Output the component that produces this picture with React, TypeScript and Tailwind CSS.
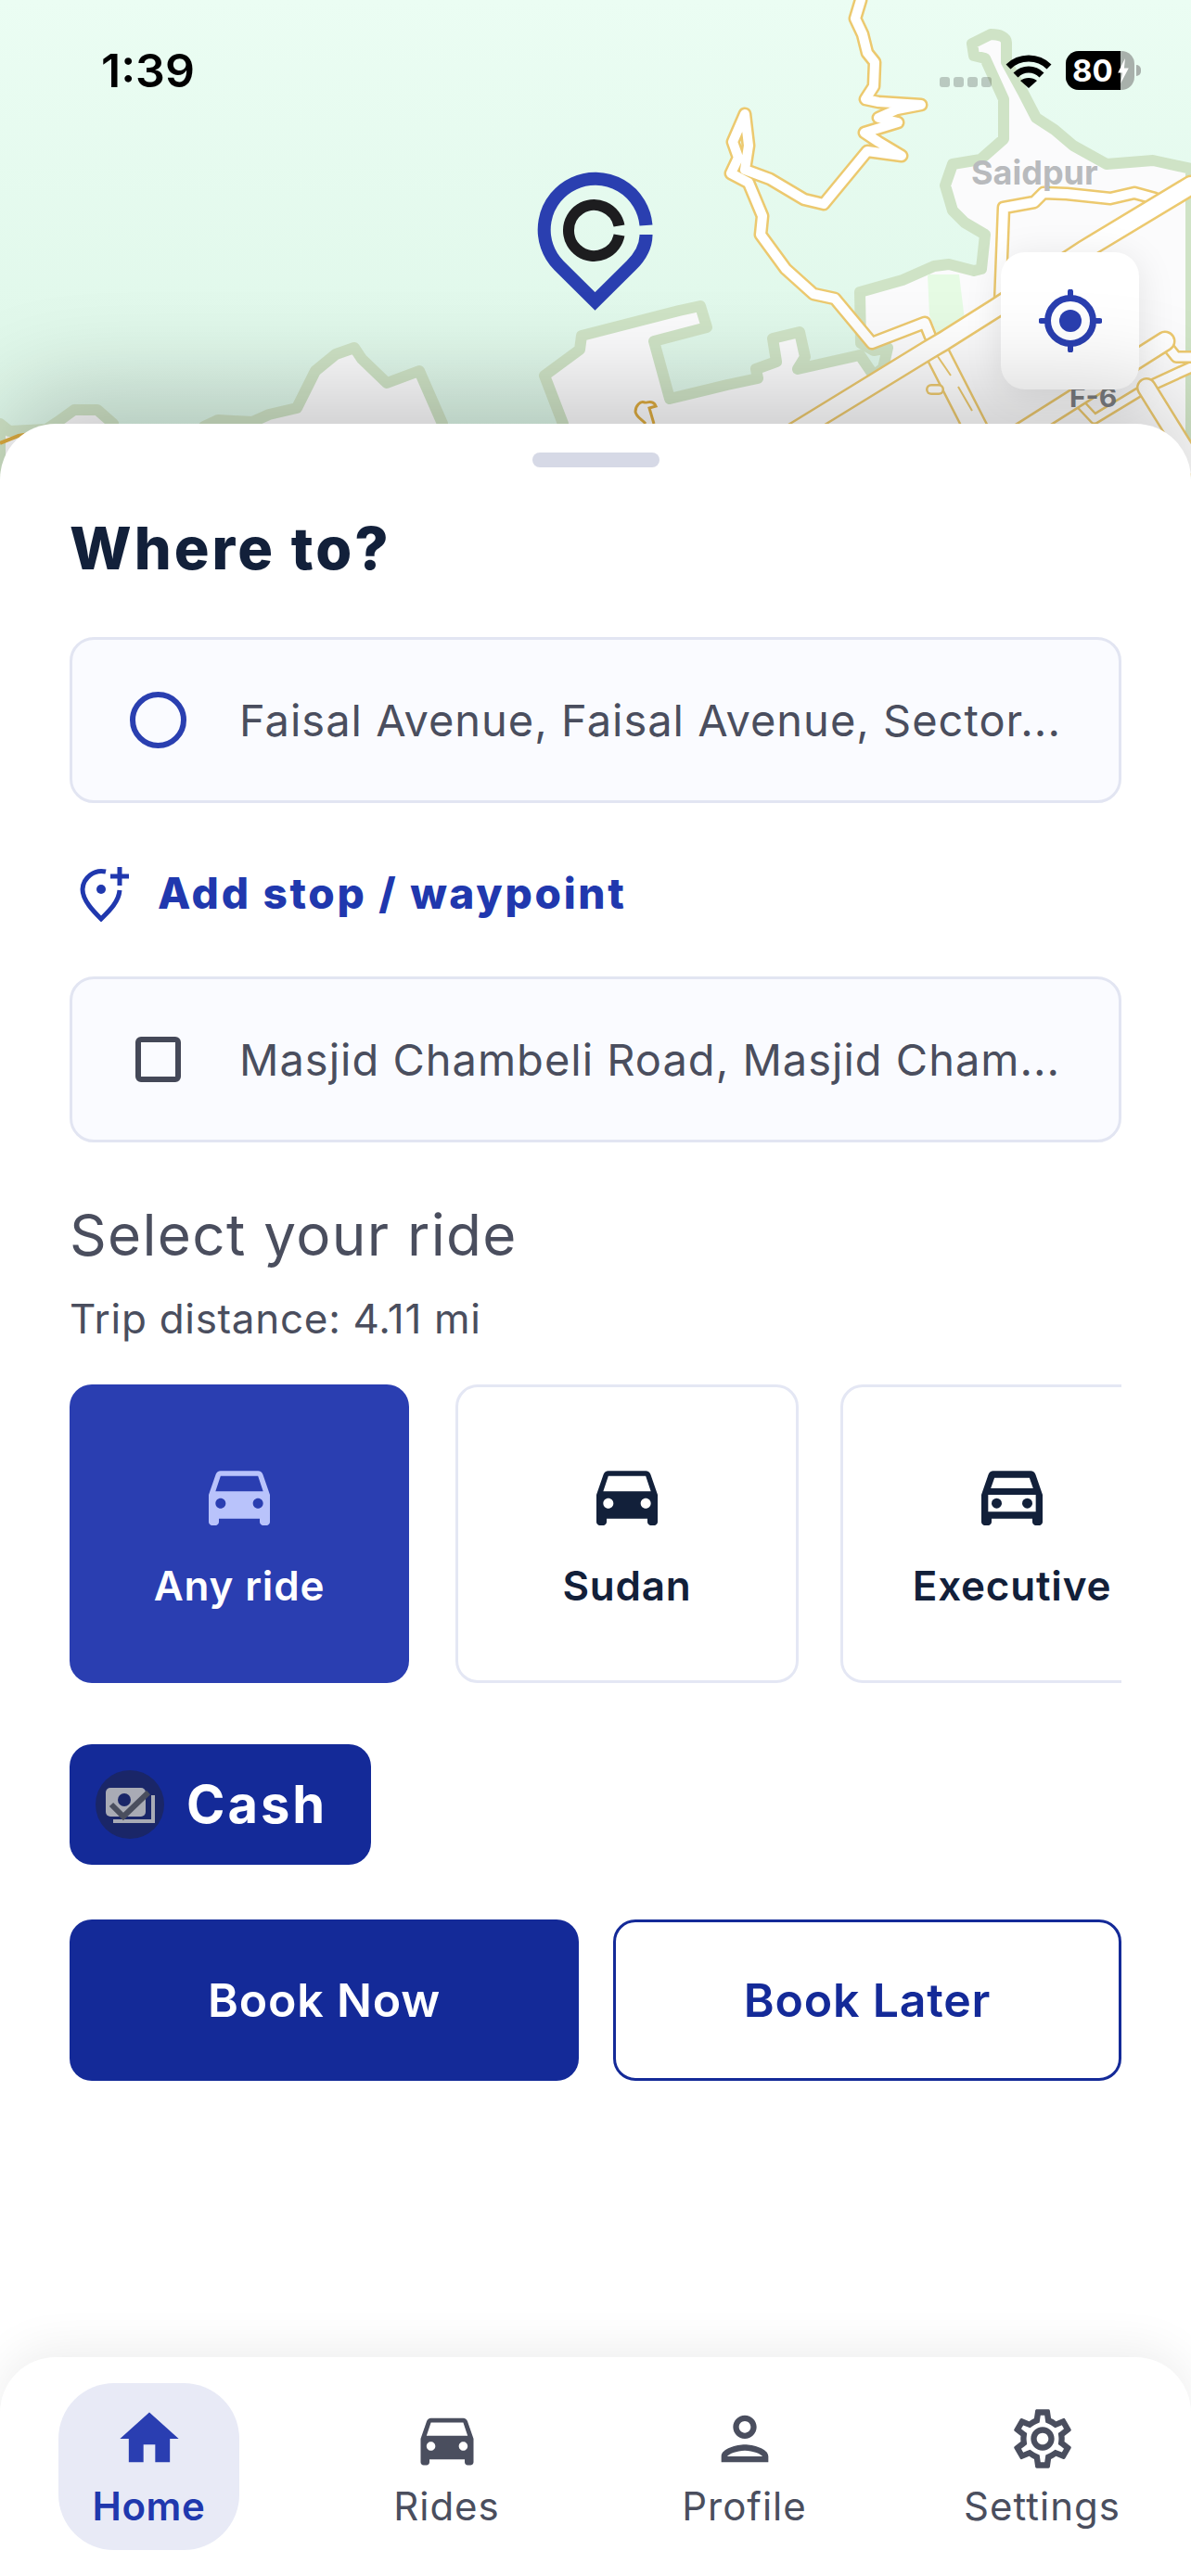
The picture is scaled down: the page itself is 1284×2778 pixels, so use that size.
import { MdDirectionsCar, MdHome, MdOutlineDirectionsCar, MdOutlinePerson, MdOutlineSettings } from "react-icons/md"

const land =
  "M1068 37 C1078 37 1085 40 1085 46 L1085 67 L1103 100 L1117 127 L1137 140 L1157 157 L1193 177 L1243 173 L1284 182 L1284 520 L0 520 L0 457 L10 465 L50 463 L62 455 L80 442 L105 442 L122 457 L122 480 L220 480 L220 460 L235 453 L272 455 L290 447 L320 440 L340 400 L362 382 L382 375 L390 387 L417 413 L452 400 L477 457 L480 480 L610 480 L607 457 L587 405 L625 377 L627 362 L732 335 L755 330 L762 353 L705 368 L722 430 L784 415 L817 408 L815 398 L837 390 L833 365 L862 358 L868 385 L860 398 L927 383 L942 405 L952 397 L957 375 L942 378 L928 370 L927 315 L973 302 L1007 287 L1023 285 L1050 292 L1058 290 L1062 253 L1040 240 L1027 227 L1019 200 L1027 177 L1057 172 L1082 150 L1082 107 L1062 63 L1050 60 L1048 47 Z"

// d, outer (yellow) width, inner (white) width
const roads: [string, number, number][] = [
  [
    "M928 0 L922 20 L930 37 L935 57 L943 67 L942 93 L933 107 L947 110 L993 113 L967 118 L947 127 L968 132 L932 143 L947 153 L972 168 L935 163 L888 220 L867 215 L830 193 L803 183 L807 157 L803 123 L790 153 L796 170 L788 187 L807 197 L822 233 L820 253 L847 290 L877 317 L900 322 L940 370 L997 348 L1003 363",
    15,
    10,
  ],
  ["M1078 330 L1082 224 L1115 218 L1125 208 L1150 209 L1197 214 L1223 208 L1245 214", 15, 10],
  ["M1236 418 L1284 396", 14, 9],
  ["M1256 370 L1268 385 L1284 385", 14, 9],
  ["M1236 418 L1180 452 L1165 436", 12, 7],
  ["M1010 380 L1056 470", 28, 23],
  ["M1004 420 L1012 420", 12, 7],
  ["M850 470 L1000 378 L1017 368 L1074 332 L1168 270 L1284 200", 23, 18],
  ["M1095 470 L1256 368", 23, 18],
  ["M1236 418 L1290 505", 22, 17],
]

const NAV = [
  { label: "Home", Icon: MdHome, active: true },
  { label: "Rides", Icon: MdDirectionsCar, active: false },
  { label: "Profile", Icon: MdOutlinePerson, active: false },
  { label: "Settings", Icon: MdOutlineSettings, active: false },
]

function MapLayer() {
  return (
    <svg viewBox="0 0 1284 520" className="absolute inset-0 h-[520px] w-[1284px]">
      <defs>
        <linearGradient id="water" x1="0" y1="0" x2="0" y2="1">
          <stop offset="0" stopColor="#ebfdf3" />
          <stop offset="1" stopColor="#dcf6e7" />
        </linearGradient>
      </defs>
      <rect width="1284" height="520" fill="url(#water)" />
      <path d={land} fill="#fbfbfc" stroke="#cfe3c6" strokeWidth="12" strokeLinejoin="round" />
      <path d="M1000 296 L1034 296 L1040 345 L1012 365 L1002 340 Z" fill="#e6fbe4" />
      {roads.map(([d, outer, inner]) => (
        <g key={d} fill="none" strokeLinejoin="round" strokeLinecap="round">
          <path d={d} stroke="#ecc96f" strokeWidth={outer} />
          <path d={d} stroke="#ffffff" strokeWidth={inner} />
        </g>
      ))}
      <path d="M1010 383 L1025 405 M1033 417 L1048 443" stroke="#ecc96f" strokeWidth="2" />
      <path
        d="M705 457 L700 440 L707 438 L706 436 C702 431 697 435 695 434 C690 432 685 438 685 444 C686 450 692 452 696 457"
        fill="#fbfbfc"
        stroke="#dcab40"
        strokeWidth="3"
      />
      <path d="M0 478 L20 470 L44 466" fill="none" stroke="#dcab40" strokeWidth="4" />
    </svg>
  )
}

function Pin() {
  return (
    <svg viewBox="0 0 125 150" className="absolute left-[579px] top-[185px] h-[150px] w-[125px]" fill="none">
      <path
        d="M117.5 58 A55 55 0 1 0 23.6 101.4 L62.5 140 L101.4 101.4 C112 91 117.5 80 117.5 68"
        stroke="#2a3fb0"
        strokeWidth="14"
        strokeMiterlimit="10"
      />
      <path d="M88.5 58.5 A27.5 27.5 0 1 0 88.5 68.5" stroke="#1d1d1f" strokeWidth="12" />
    </svg>
  )
}

function LocateIcon() {
  return (
    <svg viewBox="0 0 68 68" className="h-[68px] w-[68px]" fill="none" stroke="#2a3fb0">
      <circle cx="34" cy="34" r="24.5" strokeWidth="7" />
      <circle cx="34" cy="34" r="12" fill="#2a3fb0" stroke="none" />
      <path d="M34 2.5 V9 M34 59 V65.5 M2.5 34 H9 M59 34 H65.5" strokeWidth="6" strokeLinecap="round" />
    </svg>
  )
}

function StatusBar() {
  return (
    <div className="absolute left-0 top-0 flex h-[150px] w-full items-center pl-[109px] pr-[54px] pt-[2px]">
      <span className="text-[50px] font-semibold leading-none text-black">1:39</span>
      <div className="ml-auto flex items-center">
        <div className="mr-[15px] mt-[24px] flex gap-[4px]">
          <i className="h-[11px] w-[11px] rounded-[3px] bg-black/20" />
          <i className="h-[11px] w-[11px] rounded-[3px] bg-black/20" />
          <i className="h-[11px] w-[11px] rounded-[3px] bg-black/20" />
          <i className="h-[11px] w-[11px] rounded-[3px] bg-black/20" />
        </div>
        <svg viewBox="0 0 50 38" className="mr-[15px] h-[38px] w-[50px]" fill="none" stroke="#000" strokeWidth="7">
          <path d="M3 15 C15 3 35 3 47 15" />
          <path d="M11 24 C19 16 31 16 39 24" />
          <path d="M25 38 L16 30 C21 26 29 26 34 30 Z" fill="#000" stroke="none" />
        </svg>
        <div className="relative flex h-[42px] w-[74px] overflow-hidden rounded-[14px] bg-[#a8b0ab]">
          <div className="flex h-full w-[59px] items-center bg-black pl-[7px] text-[33px] font-bold leading-none text-white">
            80
          </div>
          <svg viewBox="0 0 14 28" className="absolute left-[55px] top-[8px] h-[27px] w-[14px]">
            <path d="M9 0 L1 16 H6 L4 28 L13 11 H8 Z" fill="#fff" />
          </svg>
        </div>
        <div className="ml-[2px] h-[12px] w-[5px] rounded-r-full bg-[#a8b0ab]" />
      </div>
    </div>
  )
}

function LocationCard({ text, marker }: { text: string; marker: React.ReactNode }) {
  return (
    <div className="flex h-[179px] items-center rounded-[26px] border-[3px] border-[#e2e5f2] bg-[#fafbff]">
      <div className="flex w-[180px] justify-center pl-[4px]">{marker}</div>
      <span className="text-[47px] leading-none tracking-[1px] text-[#4a4e5e]">{text}</span>
    </div>
  )
}

function CashIcon() {
  return (
    <svg viewBox="0 0 74 74" className="h-[74px] w-[74px]" fill="none">
      <circle cx="37" cy="37" r="37" fill="#1a2668" />
      <rect x="11" y="19" width="43" height="31" rx="5" fill="#a9abb5" />
      <circle cx="31" cy="32" r="7" fill="#1a2668" />
      <path d="M62 27 V55 H19" stroke="#a9abb5" strokeWidth="4" />
      <path d="M17 37 L30 50 L57 24" stroke="#4a4e5e" strokeWidth="6" />
    </svg>
  )
}

export default function App() {
  return (
    <div className="relative flex h-[2778px] w-[1284px] flex-col overflow-hidden bg-white font-['Inter',sans-serif]">
      <div className="relative -mb-[63px] h-[520px] shrink-0">
        <MapLayer />
        <span className="absolute left-[1047px] top-[164px] text-[36px] font-bold leading-[44px] text-[#b8babd]">
          Saidpur
        </span>
        <span className="absolute left-[1153px] top-[410px] text-[30px] font-bold leading-[36px] text-[#7e8084]">
          F-6
        </span>
        <Pin />
        <StatusBar />
        <button className="absolute left-[1079px] top-[272px] flex h-[148px] w-[149px] items-center justify-center rounded-[26px] bg-white shadow-[0_6px_40px_rgba(0,0,0,0.1)]">
          <LocateIcon />
        </button>
      </div>

      <div className="relative flex flex-1 flex-col rounded-t-[60px] bg-white shadow-[0_-36px_110px_rgba(0,0,0,0.2)]">
        <div className="mx-auto mt-[31px] h-[16px] w-[137px] rounded-full bg-[#d6d9e6]" />

        <div className="flex flex-col pl-[75px] pr-[75px]">
          <h1 className="mt-[51px] text-[63px] font-extrabold leading-[72px] tracking-[3px] text-[#12203a]">Where to?</h1>

          <div className="mt-[60px]">
            <LocationCard
              text="Faisal Avenue, Faisal Avenue, Sector..."
              marker={<div className="h-[61px] w-[61px] rounded-full border-[6px] border-[#2a3fb0]" />}
            />
          </div>

          <div className="mt-[63px] flex h-[68px] items-center">
            <svg viewBox="0 0 54 61" className="ml-[11px] h-[61px] w-[54px]" fill="none" stroke="#2038ae" strokeWidth="5">
              <path d="M28 7 A20.5 20.5 0 0 0 3 26 C3 38 15 50 23 58 C31 50 42 40 43 27" />
              <circle cx="23" cy="26" r="5" fill="#2038ae" stroke="none" />
              <path d="M33 12 H53 M43 2 V22" />
            </svg>
            <span className="ml-[30px] text-[46px] font-extrabold leading-none tracking-[2.7px] text-[#2038ae]">
              Add stop / waypoint
            </span>
          </div>

          <div className="mt-[56px]">
            <LocationCard
              text="Masjid Chambeli Road, Masjid Cham..."
              marker={<div className="h-[49px] w-[49px] rounded-[6px] border-[6px] border-[#444858]" />}
            />
          </div>

          <h2 className="mt-[64px] text-[62px] font-normal leading-[72px] tracking-[1.3px] text-[#4a4e5e]">
            Select your ride
          </h2>
          <p className="mt-[29px] text-[44px] leading-[50px] tracking-[0.7px] text-[#4a4e5e]">Trip distance: 4.11 mi</p>

          <div className="mt-[46px] flex h-[322px] overflow-hidden">
            <div className="mr-[50px] flex h-full w-[366px] shrink-0 flex-col items-center rounded-[24px] bg-[#2a3eb1] pt-[75px]">
              <MdDirectionsCar size={88} color="#b9c3fb" />
              <span className="mt-[29px] text-[44px] font-semibold leading-[50px] tracking-[0.8px] text-white">Any ride</span>
            </div>
            <div className="mr-[45px] flex h-full w-[370px] shrink-0 flex-col items-center rounded-[24px] border-[3px] border-[#e4e7f4] pt-[72px]">
              <MdDirectionsCar size={88} color="#12203a" />
              <span className="mt-[29px] text-[44px] font-semibold leading-[50px] tracking-[0.8px] text-[#12203a]">Sudan</span>
            </div>
            <div className="flex h-full w-[370px] shrink-0 flex-col items-center rounded-[24px] border-[3px] border-[#e4e7f4] pt-[72px]">
              <MdOutlineDirectionsCar size={88} color="#12203a" />
              <span className="mt-[29px] text-[44px] font-semibold leading-[50px] tracking-[0.8px] text-[#12203a]">Executive</span>
            </div>
          </div>

          <div className="mt-[66px] flex h-[130px] w-[325px] items-center rounded-[24px] bg-[#142a98] pl-[28px]">
            <CashIcon />
            <span className="ml-[24px] text-[56px] font-bold leading-none tracking-[3px] text-white">Cash</span>
          </div>

          <div className="mt-[59px] flex gap-[37px]">
            <button className="h-[174px] w-[549px] rounded-[24px] bg-[#142a98] text-[50px] font-semibold tracking-[0.8px] text-white">
              Book Now
            </button>
            <button className="h-[174px] w-[548px] rounded-[24px] border-[3px] border-[#142a98] text-[50px] font-semibold tracking-[0.8px] text-[#142a98]">
              Book Later
            </button>
          </div>
        </div>

        <nav className="mt-auto grid h-[236px] grid-cols-4 rounded-t-[60px] bg-white shadow-[0_-10px_50px_rgba(0,0,0,0.07)]">
          {NAV.map(({ label, Icon, active }) => (
            <div key={label} className="flex justify-center pt-[28px]">
              <div
                className={
                  active
                    ? "flex h-[180px] w-[195px] flex-col items-center rounded-[60px] bg-[#e8eaf6] pt-[22px]"
                    : "flex h-[180px] w-[195px] flex-col items-center pt-[22px]"
                }
              >
                <Icon size={76} color={active ? "#2a3eb1" : "#4a4e5e"} />
                <span
                  className={
                    active
                      ? "mt-[10px] text-[42px] font-semibold leading-[50px] tracking-[0.6px] text-[#2038ae]"
                      : "mt-[10px] text-[42px] leading-[50px] tracking-[1px] text-[#4a4e5e]"
                  }
                >
                  {label}
                </span>
              </div>
            </div>
          ))}
        </nav>
      </div>
    </div>
  )
}
